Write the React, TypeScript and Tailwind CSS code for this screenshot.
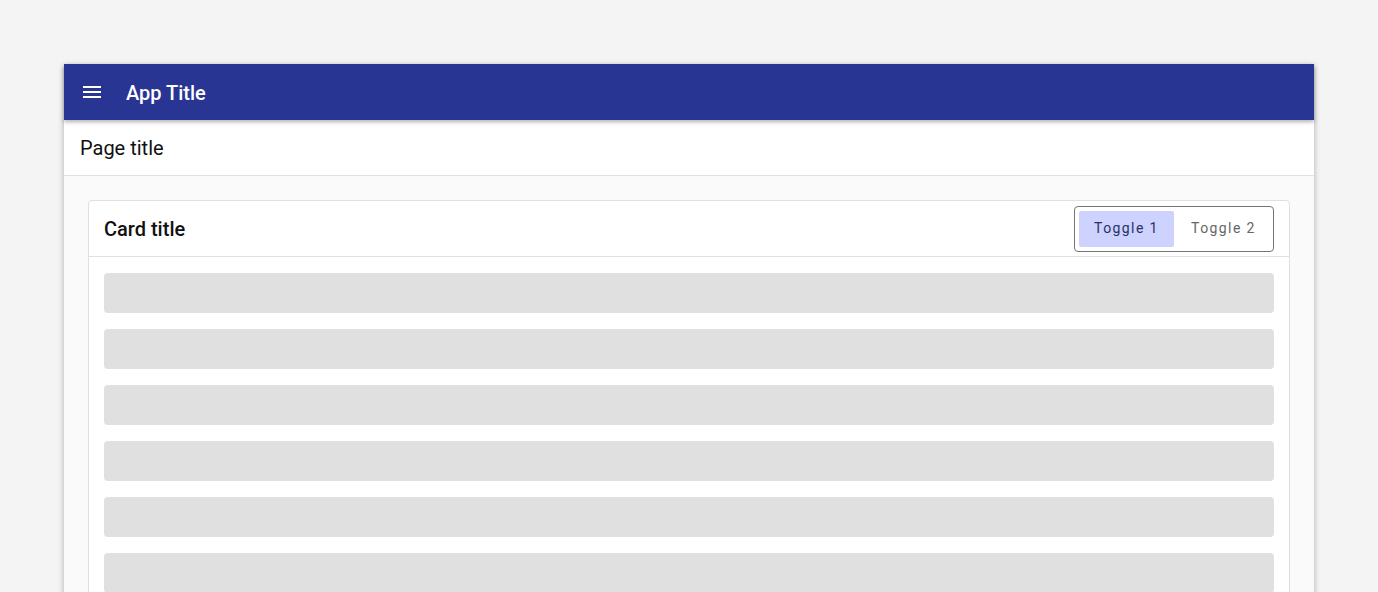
import React from "react";

export default function App() {
  const bars = [0, 1, 2, 3, 4, 5, 6];
  return (
    <div className="min-h-[592px] h-[592px] overflow-hidden bg-[#f4f4f4] pt-16 px-16" style={{ fontFamily: "Roboto, 'Noto Sans', sans-serif" }}>
      <div className="w-[1250px] h-[600px] bg-[#fafafa] shadow-[0_2px_6px_rgba(0,0,0,0.3)] flex flex-col">
        <div className="h-14 shrink-0 bg-[#283593] flex items-center pl-4 text-white shadow-[0_2px_4px_rgba(0,0,0,0.3)] relative z-10">
          <svg width="24" height="24" viewBox="0 0 24 24" fill="white">
            <path d="M3 18h18v-2H3v2zm0-5h18v-2H3v2zm0-7v2h18V6H3z" />
          </svg>
          <span className="ml-[22px] text-[20px] font-medium leading-none pt-[2px]">App Title</span>
        </div>
        <div className="h-14 shrink-0 bg-white border-b border-[#e0e0e0] flex items-center px-4 text-[20px] text-[#111]">
          Page title
        </div>
        <div className="p-6">
          <div className="bg-white border border-[#e0e0e0] rounded-[4px]">
            <div className="h-14 border-b border-[#e0e0e0] flex items-center justify-between pl-[15px] pr-[15px]">
              <span className="text-[20px] font-medium text-[#111]">Card title</span>
              <div className="h-[46px] w-[200px] border border-[#757575] rounded-[4px] flex items-center p-1 gap-1">
                <button className="h-[36px] w-[95px] bg-[#cdd2fe] rounded-[2px] text-[14px] font-normal tracking-[1.4px] text-[#283066]">Toggle 1</button>
                <button className="h-[36px] flex-1 text-[14px] font-normal tracking-[1.4px] text-[#666]">Toggle 2</button>
              </div>
            </div>
            <div className="px-[15px] pt-4 flex flex-col gap-4">
              {bars.map((b) => (
                <div key={b} className="h-10 shrink-0 bg-[#e0e0e0] rounded-[4px]" />
              ))}
            </div>
          </div>
        </div>
      </div>
    </div>
  );
}
